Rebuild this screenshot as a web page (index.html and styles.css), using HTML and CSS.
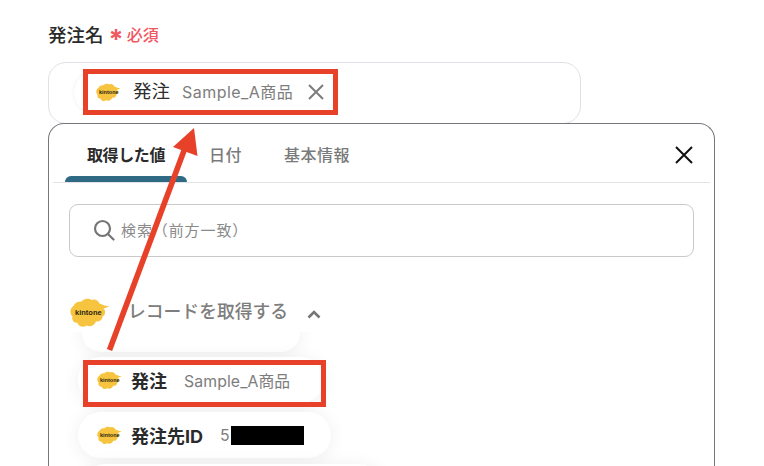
FILE: index.html
```html
<!DOCTYPE html>
<html lang="ja">
<head>
<meta charset="utf-8">
<title>発注名</title>
<link rel="stylesheet" href="styles.css">
</head>
<body>
<svg class="defs" width="0" height="0" aria-hidden="true">
  <symbol id="blob" viewBox="0 0 40 30">
    <path fill="#f7c440" d="M4 7.500C5 4 9 3.500 11.500 3.500 14 .5 19 0 21.500 2 24.500 .5 28 2 29.500 5.500L34.500 7.500 39.500 8.500 33.500 10.500C36 13 35.500 17 32.500 18.500 32.500 22 29 24 26 23.500 24.500 27.500 20 29.500 16.500 27.500 13 30 8.500 28.500 7.500 25 3.500 25 1.500 21.500 2.500 18.500 -.5 15.500 -.5 10 4 7.500Z"/>
  </symbol>
</svg>

<main class="page">
  <div class="field-label">
    <span>発注名</span><span class="star">*</span><span class="required">必須</span>
  </div>

  <div class="input-box">
    <div class="chip">
      <span class="logo logo-sm"><svg><use href="#blob"/></svg><b>kintone</b></span>
      <span class="chip-name">発注</span>
      <span class="chip-value">Sample_A商品</span>
      <svg class="chip-x" viewBox="0 0 16 16"><path d="M1 1 15 15M15 1 1 15"/></svg>
    </div>
  </div>

  <section class="panel">
    <div class="tabs">
      <div class="tab tab-active">取得した値</div>
      <div class="tab tab-date">日付</div>
      <div class="tab tab-basic">基本情報</div>
      <svg class="panel-x" viewBox="0 0 20 20"><path d="M2 2 18 18M18 2 2 18"/></svg>
    </div>

    <div class="search">
      <svg class="search-icon" viewBox="0 0 22 22"><circle cx="9.500" cy="9.500" r="7.500"/><path d="M15 15 20.500 20.500"/></svg>
      <span>検索（前方一致）</span>
    </div>

    <div class="group">
      <span class="logo logo-lg"><svg><use href="#blob"/></svg><b>kintone</b></span>
      <span class="group-title">レコードを取得する</span>
      <svg class="chevron" viewBox="0 0 14 9"><path d="M1.500 7.500 7 2 12.500 7.500"/></svg>
    </div>

    <div class="list">
      <div class="pill pill-hidden"></div>
      <div class="pill pill-first">
        <span class="logo logo-sm"><svg><use href="#blob"/></svg><b>kintone</b></span>
        <span class="pill-name">発注</span>
        <span class="pill-value">Sample_A商品</span>
      </div>
      <div class="pill pill-second">
        <span class="logo logo-sm"><svg><use href="#blob"/></svg><b>kintone</b></span>
        <span class="pill-name">発注先ID</span>
        <span class="pill-value pill-value-id">5</span>
        <span class="redact"></span>
      </div>
      <div class="pill pill-third"></div>
    </div>
  </section>
</main>

<div class="mark mark-top"></div>
<div class="mark mark-list"></div>
<svg class="arrow" viewBox="0 0 764 466" width="764" height="466" aria-hidden="true">
  <path class="arrow-line" d="M109.500 350 185 148"/>
  <path class="arrow-head" d="M194 128 197.500 156 173 147Z"/>
</svg>
</body>
</html>
```
FILE: styles.css
```css
* { box-sizing: border-box; }

html, body {
  margin: 0;
  height: 466px;
  overflow: hidden;
  background: #fff;
}

body {
  position: relative;
  font-family: "Inter", "Noto Sans CJK JP", sans-serif;
  color: #2a2a2a;
}

.defs { position: absolute; }

.page {
  padding: 24px 49px 0 48px;
}

.field-label {
  display: flex;
  align-items: center;
  height: 22px;
  font-size: 18.500px;
  font-weight: 500;
  line-height: 22px;
}

.star {
  margin-left: 5px;
  color: #f0575f;
  font-size: 27px;
  font-weight: 700;
  line-height: 22px;
  position: relative;
  top: 5px;
}

.required {
  margin-left: 3px;
  color: #f0575f;
  font-size: 16px;
  font-weight: 500;
}

.input-box {
  width: 533px;
  height: 62px;
  margin-top: 16px;
  padding: 9px 0 0 25px;
  border: 1px solid #e0e1e6;
  border-radius: 18px;
}

.chip {
  display: flex;
  align-items: center;
  width: 263px;
  height: 41px;
  padding-left: 22px;
  background: #fff;
  border-radius: 21px;
  box-shadow: 0 0 4px rgba(0, 0, 0, .07);
}

.chip-name {
  margin-left: 12px;
  font-size: 18.500px;
  line-height: 22px;
  position: relative;
  top: -2px;
  color: #2e2e2e;
}

.chip-value {
  margin-left: 12px;
  font-size: 16px;
  letter-spacing: .45px;
  position: relative;
  top: -2px;
  color: #7d7d7d;
}

.chip-x {
  width: 16px;
  height: 16px;
  margin-left: 15px;
  position: relative;
  top: -1px;
  fill: none;
  stroke: #7d7d7d;
  stroke-width: 2;
}

.logo {
  position: relative;
  display: block;
  flex: none;
}

.logo svg {
  display: block;
  width: 100%;
  height: 100%;
}

.logo b {
  position: absolute;
  left: 0;
  font-family: "Liberation Sans", sans-serif;
  font-weight: 700;
  color: #2b2410;
  white-space: nowrap;
}

.logo-sm { width: 25px; height: 19px; }
.logo-sm b { top: 6px; left: 3px; font-size: 5.500px; line-height: 6px; }

.logo-lg { width: 40px; height: 30px; }
.logo-lg b { top: 9px; left: 5px; font-size: 7.500px; line-height: 11px; }

.panel {
  position: relative;
  width: 667px;
  height: 360px;
  margin-top: -1px;
  padding: 0 4px;
  border: 1px solid #75777c;
  border-bottom: 0;
  border-radius: 16px 16px 0 0;
  background: #fff;
  overflow: hidden;
}

.tabs {
  position: relative;
  display: flex;
  height: 59px;
  border-bottom: 1px solid #e3e4e7;
  font-size: 16px;
  font-weight: 500;
  color: #7a7a7a;
}

.tab {
  padding-top: 20px;
  line-height: 22px;
  letter-spacing: .5px;
}

.tab-active {
  position: relative;
  width: 122px;
  margin-left: 12px;
  text-align: center;
  color: #2a2a2a;
  font-weight: 700;
  letter-spacing: -.4px;
}

.tab-active::after {
  content: "";
  position: absolute;
  left: 0;
  right: 0;
  bottom: 0;
  height: 6px;
  border-radius: 6px 6px 0 0;
  background: #2e6a84;
}

.tab-date { margin-left: 22px; }
.tab-basic { margin-left: 42px; }

.panel-x {
  width: 20px;
  height: 20px;
  margin: 21px 16px 0 auto;
  fill: none;
  stroke: #111;
  stroke-width: 2;
}

.search {
  display: flex;
  align-items: center;
  width: 625px;
  height: 53px;
  margin: 21px 0 0 16px;
  padding: 0 0 2px 23px;
  border: 1px solid #c9c9cc;
  border-radius: 9px;
  font-size: 15px;
  letter-spacing: .9px;
  color: #8a8a8a;
}

.search-icon {
  width: 22px;
  height: 22px;
  margin-right: 6px;
  fill: none;
  stroke: #757575;
  stroke-width: 2.200;
  stroke-linecap: round;
}

.group {
  display: flex;
  align-items: center;
  height: 30px;
  margin: 41px 0 0 17px;
}

.group-title {
  margin-left: 18px;
  font-size: 17.800px;
  font-weight: 500;
  line-height: 30px;
  position: relative;
  top: -1px;
  color: #7d7d7d;
}

.chevron {
  width: 14px;
  height: 9px;
  margin: 2px 0 0 19px;
  fill: none;
  stroke: #757575;
  stroke-width: 2.600;
}

.list {
  position: absolute;
  top: 0;
  left: 0;
  width: 100%;
  height: 100%;
}

.pill {
  position: absolute;
  display: flex;
  align-items: center;
  height: 46px;
  left: 29px;
  padding-left: 19px;
  background: #fff;
  border-radius: 23px;
  box-shadow: 0 2px 18px rgba(0, 0, 0, .07);
}

.pill-hidden { top: 190px; left: 33px; width: 218px; height: 38px; clip-path: inset(18px -30px -30px -30px); }
.pill-first { top: 233px; width: 246px; }
.pill-second { top: 288px; width: 253px; }
.pill-third { top: 340px; left: 33px; width: 300px; }

.pill-name {
  margin-left: 9px;
  font-size: 18px;
  font-weight: 700;
  color: #2a2a2a;
}

.pill-value {
  margin-left: 17px;
  font-size: 15.800px;
  letter-spacing: .1px;
  color: #7d7d7d;
}

.pill-value-id {
  margin-left: 17px;
}

.redact {
  width: 73px;
  height: 19px;
  margin-left: 1px;
  background: #000;
}

.mark {
  position: absolute;
  border: 5px solid #e8412a;
}

.mark-top { left: 83px; top: 69px; width: 255px; height: 46px; }
.mark-list { left: 83px; top: 360px; width: 243px; height: 47px; }

.arrow {
  position: absolute;
  left: 0;
  top: 0;
  pointer-events: none;
}

.arrow-line { fill: none; stroke: #e8412a; stroke-width: 5.600; }
.arrow-head { fill: #e8412a; }
```
